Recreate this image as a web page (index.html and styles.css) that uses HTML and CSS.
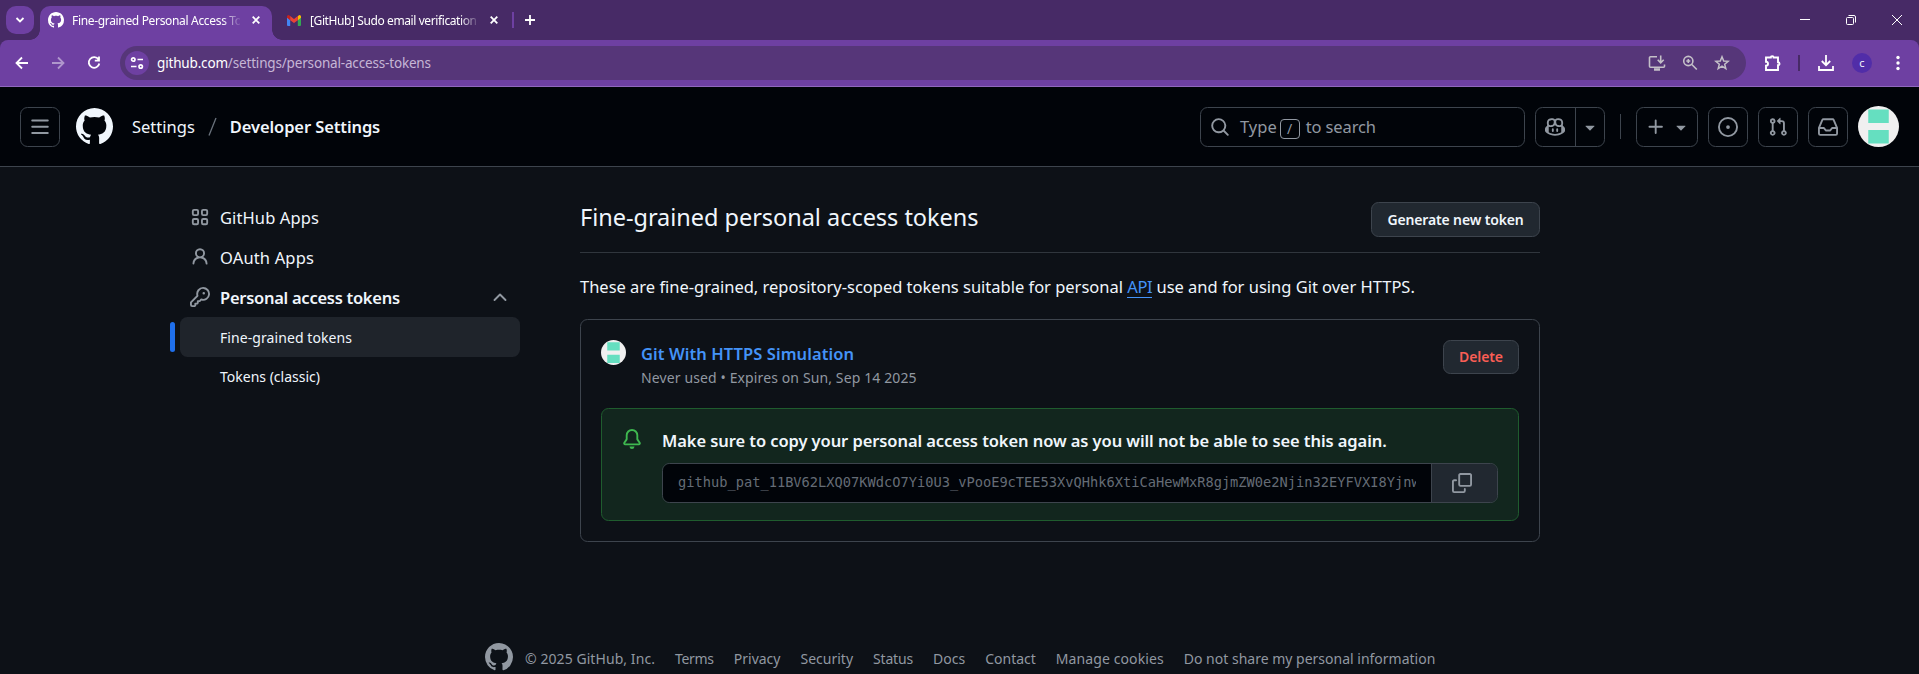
FILE: index.html
```html
<!DOCTYPE html>
<html lang="en">
<head>
<meta charset="utf-8">
<title>Fine-grained Personal Access Tokens</title>
<link rel="stylesheet" href="styles.css">
</head>
<body>
<svg class="defs" aria-hidden="true">
  <symbol id="mark" viewBox="0 0 16 16"><path d="M8 0c4.42 0 8 3.58 8 8a8.013 8.013 0 0 1-5.45 7.59c-.4.08-.55-.17-.55-.38 0-.27.01-1.13.01-2.2 0-.75-.25-1.23-.54-1.48 1.78-.2 3.65-.88 3.65-3.95 0-.88-.31-1.59-.82-2.15.08-.2.36-1.02-.08-2.12 0 0-.67-.22-2.2.82-.64-.18-1.32-.27-2-.27-.68 0-1.36.09-2 .27-1.53-1.03-2.2-.82-2.2-.82-.44 1.1-.16 1.92-.08 2.12-.51.56-.82 1.28-.82 2.15 0 3.06 1.86 3.75 3.64 3.95-.23.2-.44.55-.51 1.07-.46.21-1.61.55-2.33-.66-.15-.24-.6-.83-1.23-.82-.67.01-.27.38.01.53.34.19.73.9.82 1.13.16.45.68 1.31 2.69.94 0 .67.01 1.3.01 1.49 0 .21-.15.45-.55.38A7.995 7.995 0 0 1 0 8c0-4.42 3.58-8 8-8Z"/></symbol>
  <symbol id="caret" viewBox="0 0 16 16"><path d="m4.427 7.427 3.396 3.396a.25.25 0 0 0 .354 0l3.396-3.396A.25.25 0 0 0 11.396 7H4.604a.25.25 0 0 0-.177.427Z"/></symbol>
  <symbol id="identicon" viewBox="0 0 40 40"><rect width="40" height="40" fill="#f0f0f0"/><path fill="#65dfc0" d="M10 3.500h20v13.200H10zM10 23.500h20v13.200H10z"/></symbol>
</svg>

<div class="tabstrip">
  <div class="tabsearch"><svg width="10" height="10" viewBox="0 0 10 10" class="line w2"><path d="M1.500 3 5 6.500 8.500 3"/></svg></div>
  <div class="tab active">
    <svg class="fav" width="16" height="16"><use href="#mark"/></svg>
    <span class="tabtitle"><span class="t-tab1">Fine-grained Personal Access Tokens</span></span>
    <svg class="line w2 close" width="8" height="8" viewBox="0 0 8 8"><path d="M.7.7l6.600 6.600M7.300.7.7 7.300"/></svg>
  </div>
  <div class="tab">
    <svg width="14" height="11" viewBox="0 0 14 11"><path fill="#4285f4" d="M0 2v8a1 1 0 0 0 1 1h2.200V4.500z"/><path fill="#34a853" d="M14 2v8a1 1 0 0 1-1 1h-2.200V4.500z"/><path fill="#fbbc04" d="M10.800 1.300v3.900L14 2.800V1.500A1.500 1.500 0 0 0 11.600.4z"/><path fill="#c5221f" d="M0 1.500v1.300l3.200 2.400V1L2.400.4A1.500 1.500 0 0 0 0 1.500z"/><path fill="#ea4335" d="M3.200 1 7 3.900 10.800 1v4.200L7 8 3.200 5.200z"/></svg>
    <span class="tabtitle"><span class="t-tab2">[GitHub] Sudo email verification code</span></span>
    <svg class="line w2 close" width="8" height="8" viewBox="0 0 8 8"><path d="M.7.7l6.600 6.600M7.300.7.7 7.300"/></svg>
  </div>
  <i class="tabsep"></i>
  <svg class="line w2 newtab" width="10" height="10" viewBox="0 0 10 10"><path d="M5 0v10M0 5h10"/></svg>
  <div class="winctl">
    <svg class="line w1" width="10" height="10" viewBox="0 0 10 10"><path d="M0 4.500h10"/></svg>
    <svg class="line w1" width="10" height="10" viewBox="0 0 10 10"><rect x=".5" y="2.500" width="7" height="7" rx="1"/><path d="M2.500.5H8A1.500 1.500 0 0 1 9.500 2v5.500"/></svg>
    <svg class="line w1" width="10" height="10" viewBox="0 0 10 10"><path d="M0 0l10 10M10 0 0 10"/></svg>
  </div>
</div>

<div class="toolbar-wrap">
<div class="toolbar">
  <div class="nav">
    <svg class="line w2" width="16" height="16" viewBox="0 0 16 16"><path d="M14 8H3M8 2.500 2.500 8 8 13.500"/></svg>
    <svg class="line w2 dim" width="16" height="16" viewBox="0 0 16 16"><path d="M2 8h11M8 2.500 13.500 8 8 13.500"/></svg>
    <svg class="line w2" width="16" height="16" viewBox="0 0 16 16"><path d="M12.500 4.500A5.300 5.300 0 1 0 13.300 8.500M13 1.500v4.200H8.800"/></svg>
  </div>
  <div class="omnibox">
    <div class="sitechip"><svg class="line" width="14" height="14" viewBox="0 0 14 14" stroke-width="1.700"><circle cx="3.300" cy="3.500" r="1.700"/><path d="M7.500 3.500H13M1 10.500h5.500"/><circle cx="10.700" cy="10.500" r="1.700"/></svg></div>
    <span class="url t-url"><b>github.com</b>/settings/personal-access-tokens</span>
    <div class="omni-icons">
      <svg class="line" width="18" height="16" viewBox="0 0 18 16" stroke-width="1.600"><path d="M9 1.800H2.500a1 1 0 0 0-1 1v8.400a1 1 0 0 0 1 1h13a1 1 0 0 0 1-1V9.500M12.700.5v7M9.700 4.800l3 3 3-3"/><path d="M6 14.500h6" stroke-width="2.500"/></svg>
      <svg class="line" width="16" height="16" viewBox="0 0 16 16" stroke-width="1.600"><circle cx="6.300" cy="6" r="4.600"/><path d="M9.800 9.500l5 5M6.300 4v4M4.300 6h4"/></svg>
      <svg class="line" width="16" height="16" viewBox="0 0 16 16" stroke-width="1.500"><path d="M8 1.800l1.700 4.200 4.500.3-3.500 2.900 1.100 4.400L8 11.200l-3.800 2.400 1.100-4.400L1.800 6.300 6.300 6z"/></svg>
    </div>
  </div>
  <svg class="line ext" width="18" height="18" viewBox="0 0 18 18" stroke-width="1.900"><path d="M2 3.500h4.800a1.400 1.400 0 0 1 2.800 0H14v4.800a1.500 1.500 0 0 1 0 3V16H2v-4.200a2 2 0 0 0 0-4z"/></svg>
  <i class="toolsep"></i>
  <svg class="line w2 dl" width="16" height="16" viewBox="0 0 16 16"><path d="M8 0v10M3.800 6 8 10.200 12.200 6M1 11v4h14v-4"/></svg>
  <span class="profile">c</span>
  <svg class="dots" width="4" height="16" viewBox="0 0 4 16"><circle cx="2" cy="2.500" r="1.700"/><circle cx="2" cy="8" r="1.700"/><circle cx="2" cy="13.500" r="1.700"/></svg>
</div>
</div>

<header class="gh">
  <button class="sq"><svg class="oct" width="20" height="20" viewBox="0 0 16 16"><path d="M1 2.750A.75.75 0 0 1 1.750 2h12.500a.75.75 0 0 1 0 1.500H1.750A.75.75 0 0 1 1 2.750Zm0 5A.75.75 0 0 1 1.750 7h12.500a.75.75 0 0 1 0 1.500H1.750A.75.75 0 0 1 1 7.750ZM1.750 12h12.500a.75.75 0 0 1 0 1.500H1.750a.75.75 0 0 1 0-1.500Z"/></svg></button>
  <svg class="logo" width="37" height="37"><use href="#mark"/></svg>
  <nav class="crumbs"><span class="t-set">Settings</span><svg width="9" height="19" viewBox="0 0 9 19"><path d="M1 18.500 8 1" fill="none" stroke="#6b737d" stroke-width="1.300"/></svg><strong class="t-dev">Developer Settings</strong></nav>
  <div class="search">
    <svg class="oct" width="20" height="20" viewBox="0 0 16 16"><path d="M10.680 11.740a6 6 0 0 1-7.922-8.982 6 6 0 0 1 8.982 7.922l3.040 3.040a.749.749 0 0 1-.326 1.275.749.749 0 0 1-.734-.215ZM11.500 7a4.499 4.499 0 1 0-8.997 0A4.499 4.499 0 0 0 11.500 7Z"/></svg>
    <span class="t-type">Type</span><kbd>/</kbd><span class="t-tosearch">to search</span>
  </div>
  <div class="split">
    <span><svg class="oct" width="20" height="20" viewBox="0 0 16 16"><path d="M7.998 15.035c-4.562 0-7.873-2.914-7.998-3.749V9.338c.085-.628.677-1.686 1.588-2.065.013-.07.024-.143.036-.218.029-.183.06-.384.126-.612-.201-.508-.254-1.084-.254-1.656 0-.87.128-1.769.693-2.484.579-.733 1.494-1.124 2.724-1.261 1.206-.134 2.262.034 2.944.765.05.053.096.108.139.165.044-.057.094-.112.143-.165.682-.731 1.738-.899 2.944-.765 1.230.137 2.145.528 2.724 1.261.566.715.693 1.614.693 2.484 0 .572-.053 1.148-.254 1.656.066.228.098.429.126.612.012.076.024.148.037.218.924.385 1.522 1.471 1.591 2.095v1.872c0 .766-3.351 3.795-8.002 3.795Zm0-1.485c2.280 0 4.584-1.110 5.002-1.433V7.862l-.023-.116c-.49.21-1.075.291-1.727.291-1.146 0-2.059-.327-2.710-.991A3.222 3.222 0 0 1 8 6.303a3.240 3.240 0 0 1-.544.743c-.65.664-1.563.991-2.710.991-.652 0-1.236-.081-1.727-.291l-.023.116v4.255c.419.323 2.722 1.433 5.002 1.433ZM6.762 2.830c-.193-.206-.637-.413-1.682-.297-1.019.113-1.479.404-1.713.7-.247.312-.369.789-.369 1.554 0 .793.129 1.171.308 1.371.162.181.519.379 1.442.379.853 0 1.339-.235 1.638-.54.315-.322.527-.827.617-1.553.117-.935-.037-1.395-.241-1.614Zm4.155-.297c-1.044-.116-1.488.091-1.681.297-.204.219-.359.679-.242 1.614.091.726.303 1.231.618 1.553.299.305.784.54 1.638.54.922 0 1.280-.198 1.442-.379.179-.2.308-.578.308-1.371 0-.765-.123-1.242-.37-1.554-.233-.296-.693-.587-1.713-.7Z"/><path d="M6.250 9.037a.75.75 0 0 1 .75.75v1.501a.75.75 0 0 1-1.500 0V9.787a.75.75 0 0 1 .75-.75Zm4.250.75v1.501a.75.75 0 0 1-1.500 0V9.787a.75.75 0 0 1 1.500 0Z"/></svg></span>
    <span><svg class="oct" width="20" height="20"><use href="#caret"/></svg></span>
  </div>
  <i class="ghsep"></i>
  <button class="sq plus"><svg class="oct" width="20" height="20" viewBox="0 0 16 16"><path d="M7.750 2a.75.75 0 0 1 .75.75V7h4.250a.75.75 0 0 1 0 1.500H8.500v4.250a.75.75 0 0 1-1.500 0V8.500H2.750a.75.75 0 0 1 0-1.500H7V2.750A.75.75 0 0 1 7.750 2Z"/></svg><svg class="oct" width="20" height="20"><use href="#caret"/></svg></button>
  <button class="sq"><svg class="oct" width="20" height="20" viewBox="0 0 16 16"><path d="M8 9.500a1.500 1.500 0 1 0 0-3 1.500 1.500 0 0 0 0 3Z"/><path d="M8 0a8 8 0 1 1 0 16A8 8 0 0 1 8 0ZM1.500 8a6.500 6.500 0 1 0 13 0 6.500 6.500 0 0 0-13 0Z"/></svg></button>
  <button class="sq"><svg class="oct" width="20" height="20" viewBox="0 0 16 16"><path d="M1.500 3.250a2.250 2.250 0 1 1 3 2.122v5.256a2.251 2.251 0 1 1-1.500 0V5.372A2.250 2.250 0 0 1 1.500 3.250Zm5.677-.177L9.573.677A.25.25 0 0 1 10 .854V2.500h1A2.500 2.500 0 0 1 13.500 5v5.628a2.251 2.251 0 1 1-1.500 0V5a1 1 0 0 0-1-1h-1v1.646a.25.25 0 0 1-.427.177L7.177 3.427a.25.25 0 0 1 0-.354ZM3.750 2.500a.75.75 0 1 0 0 1.500.75.75 0 0 0 0-1.500Zm0 9.500a.75.75 0 1 0 0 1.500.75.75 0 0 0 0-1.500Zm8.250.75a.75.75 0 1 0 1.500 0 .75.75 0 0 0-1.500 0Z"/></svg></button>
  <button class="sq"><svg class="oct" width="20" height="20" viewBox="0 0 16 16"><path d="M2.800 2.060A1.750 1.750 0 0 1 4.410 1h7.180c.7 0 1.333.417 1.610 1.060l2.740 6.395c.04.093.06.194.06.295v4.500A1.750 1.750 0 0 1 14.250 15H1.750A1.750 1.750 0 0 1 0 13.250v-4.500c0-.101.02-.202.06-.295Zm1.610.44a.25.25 0 0 0-.23.152L1.887 8H4.750a.75.75 0 0 1 .6.3L6.625 10h2.750l1.275-1.700a.75.75 0 0 1 .6-.3h2.863L11.820 2.652a.25.25 0 0 0-.23-.152Zm10.090 7h-2.875l-1.275 1.700a.75.75 0 0 1-.6.3h-3.500a.75.75 0 0 1-.6-.3L4.375 9.500H1.500v3.750c0 .138.112.25.25.25h12.500a.25.25 0 0 0 .25-.25Z"/></svg></button>
  <svg class="avatar" width="41" height="41"><use href="#identicon"/></svg>
</header>

<div class="content">
  <aside class="side">
    <a class="item"><svg width="20" height="20" viewBox="0 0 16 16" fill="none" stroke="#9198a1" stroke-width="1.500"><rect x="2.250" y="2.250" width="4.200" height="4.200" rx="1"/><rect x="9.550" y="2.250" width="4.200" height="4.200" rx="1"/><rect x="2.250" y="9.550" width="4.200" height="4.200" rx="1"/><rect x="9.550" y="9.550" width="4.200" height="4.200" rx="1"/></svg><span class="t-apps">GitHub Apps</span></a>
    <a class="item"><svg class="oct" width="20" height="20" viewBox="0 0 16 16"><path d="M10.561 8.073a6.005 6.005 0 0 1 3.432 5.142.75.75 0 1 1-1.498.07 4.500 4.500 0 0 0-8.990 0 .75.75 0 0 1-1.498-.07 6.004 6.004 0 0 1 3.431-5.142 3.999 3.999 0 1 1 5.123 0ZM10.500 5a2.500 2.500 0 1 0-5 0 2.500 2.500 0 0 0 5 0Z"/></svg><span class="t-oauth">OAuth Apps</span></a>
    <a class="item bold"><svg class="oct" width="20" height="20" viewBox="0 0 16 16"><path d="M10.500 0a5.499 5.499 0 1 1-1.288 10.848l-.932.932a.749.749 0 0 1-.53.22H7v.75a.749.749 0 0 1-.22.53l-.5.5a.749.749 0 0 1-.53.22H5v.75a.749.749 0 0 1-.22.53l-.5.5a.749.749 0 0 1-.53.22h-2A1.750 1.750 0 0 1 0 14.250v-2c0-.199.079-.389.22-.53l4.932-4.932A5.500 5.500 0 0 1 10.500 0Zm-4 5.500c-.001.431.069.86.205 1.269a.75.75 0 0 1-.181.768L1.500 12.560v1.690c0 .138.112.25.25.25h1.690l.06-.06v-1.190a.75.75 0 0 1 .75-.75h1.190l.06-.06v-1.190a.75.75 0 0 1 .75-.75h1.190l1.023-1.025a.75.75 0 0 1 .768-.18A4 4 0 1 0 6.500 5.500ZM11 6a1 1 0 1 1 0-2 1 1 0 0 1 0 2Z"/></svg><span class="t-pat">Personal access tokens</span><svg class="chev" width="14" height="10" viewBox="0 0 14 10"><path d="M1.500 8 7 2.500 12.500 8" fill="none" stroke="#9198a1" stroke-width="1.900" stroke-linecap="round" stroke-linejoin="round"/></svg></a>
    <a class="sub current"><span class="t-fg">Fine-grained tokens</span></a>
    <a class="sub"><span class="t-classic">Tokens (classic)</span></a>
  </aside>
  <main class="main">
    <div class="head"><h1 class="t-h1">Fine-grained personal access tokens</h1><button class="btn gen"><span class="t-gen">Generate new token</span></button></div>
    <p class="intro t-intro">These are fine-grained, repository-scoped tokens suitable for personal <a>API</a> use and for using Git over HTTPS.</p>
    <section class="card">
      <div class="row">
        <svg class="avatar" width="25" height="25"><use href="#identicon"/></svg>
        <div class="meta"><a class="name"><span class="t-name">Git With HTTPS Simulation</span></a><div class="used"><span class="t-used">Never used • Expires on Sun, Sep 14 2025</span></div></div>
        <button class="btn del"><span class="t-del">Delete</span></button>
      </div>
      <div class="flash">
        <svg class="bell" width="20" height="20" viewBox="0 0 16 16"><path d="M8 16a2 2 0 0 0 1.985-1.750c.017-.137-.097-.25-.235-.25h-3.500c-.138 0-.252.113-.235.25A2 2 0 0 0 8 16ZM3 5a5 5 0 0 1 10 0v2.947c0 .05.015.098.042.139l1.703 2.555A1.519 1.519 0 0 1 13.482 13H2.518a1.516 1.516 0 0 1-1.263-2.360l1.703-2.554A.255.255 0 0 0 3 7.947Zm5-3.500A3.500 3.500 0 0 0 4.500 5v2.947c0 .346-.102.683-.294.97l-1.703 2.556a.017.017 0 0 0-.003.01l.001.006c0 .002.002.004.004.006l.006.004.007.001h10.964l.007-.001.006-.004.004-.006.001-.007a.017.017 0 0 0-.003-.01l-1.703-2.554a1.745 1.745 0 0 1-.294-.97V5A3.500 3.500 0 0 0 8 1.500Z"/></svg>
        <div class="flash-body">
          <div class="warn"><span class="t-warn">Make sure to copy your personal access token now as you will not be able to see this again.</span></div>
          <div class="copy"><div class="field"><div class="token">github_pat_11BV62LXQ07KWdcO7Yi0U3_vPooE9cTEE53XvQHhk6XtiCaHewMxR8gjmZW0e2Njin32EYFVXI8Yjnw</div></div>
          <button class="copybtn"><svg class="oct" width="20" height="20" viewBox="0 0 16 16"><path d="M0 6.750C0 5.784.784 5 1.750 5h1.500a.75.75 0 0 1 0 1.500h-1.500a.25.25 0 0 0-.25.25v7.500c0 .138.112.25.25.25h7.500a.25.25 0 0 0 .25-.25v-1.500a.75.75 0 0 1 1.500 0v1.500A1.750 1.750 0 0 1 9.250 16h-7.500A1.750 1.750 0 0 1 0 14.250Z"/><path d="M5 1.750C5 .784 5.784 0 6.750 0h7.500C15.216 0 16 .784 16 1.750v7.500A1.750 1.750 0 0 1 14.250 11h-7.500A1.750 1.750 0 0 1 5 9.250Zm1.750-.25a.25.25 0 0 0-.25.25v7.500c0 .138.112.25.25.25h7.500a.25.25 0 0 0 .25-.25v-7.500a.25.25 0 0 0-.25-.25Z"/></svg></button></div>
        </div>
      </div>
    </section>
  </main>
</div>

<footer class="foot">
  <svg width="28" height="28"><use href="#mark"/></svg>
  <span class="f1">© 2025 GitHub, Inc.</span><a class="f2">Terms</a><a class="f3">Privacy</a><a class="f4">Security</a><a class="f5">Status</a><a class="f6">Docs</a><a class="f7">Contact</a><a class="f8">Manage cookies</a><a class="f9">Do not share my personal information</a>
</footer>
</body>
</html>
```
FILE: styles.css
```css
* { box-sizing: border-box; }
body { margin: 0; height: 674px; overflow: hidden; background: #0d1117; color: #f0f6fc; font-family: "Noto Sans", "Open Sans", sans-serif; font-size: 16.500px; line-height: 1.500; white-space: nowrap; display: flex; flex-direction: column; }
button { font: inherit; color: inherit; padding: 0; margin: 0; }
svg { flex: none; display: block; }
.defs { display: none; }
.line { fill: none; stroke: #fff; }
.w1 { stroke-width: 1; }
.w2 { stroke-width: 1.800; }
.oct { fill: #9198a1; }

/* Browser tabs */
.tabstrip { flex: none; height: 40px; background: #472a66; display: flex; align-items: center; padding-left: 6px; font-size: 12px; color: #fff; }
.tabsearch { width: 28px; height: 28px; border-radius: 10px; background: #6e40a2; display: grid; place-items: center; margin-right: 6px; }
.tab { display: flex; align-items: center; width: 232px; height: 34px; margin-top: 6px; padding: 0 5px 6px 15px; }
.tab.active { position: relative; background: #6e40a2; border-radius: 10px 10px 0 0; padding-left: 8px; }
.tab.active::before, .tab.active::after { content: ""; position: absolute; bottom: 0; width: 10px; height: 10px; }
.tab.active::before { left: -10px; background: radial-gradient(circle at 0 0, transparent 9.500px, #6e40a2 10px); }
.tab.active::after { right: -10px; background: radial-gradient(circle at 100% 0, transparent 9.500px, #6e40a2 10px); }
.fav { fill: #fff; }
.tabtitle { flex: none; width: 168px; margin: 2px 0 0 8px; overflow: hidden; -webkit-mask-image: linear-gradient(90deg, #000 150px, transparent 170px); mask-image: linear-gradient(90deg, #000 150px, transparent 170px); }
.tab:not(.active) .tabtitle { margin-left: 9px; }
.t-tab1 { letter-spacing: -.33px; }
.t-tab2 { letter-spacing: -.4px; }
.close { margin-left: 12px; }
.tabsep { width: 2px; height: 16px; background: #6e40a2; margin-left: 8px; }
.newtab { margin-left: 11px; }
.winctl { margin-left: auto; display: flex; gap: 36px; padding-right: 17px; }

/* Address bar */
.toolbar-wrap { flex: none; background: #472a66; }
.toolbar { height: 47px; background: #6e40a2; border-bottom: 1px solid #9068bd; border-radius: 8px 8px 0 0; display: flex; align-items: center; padding-left: 14px; }
.nav { display: flex; gap: 20px; margin-right: 18px; }
.dim { opacity: .45; }
.omnibox { width: 1626px; height: 34px; border-radius: 17px; background: #563679; display: flex; align-items: center; padding: 0 16px 0 5px; }
.sitechip { width: 24px; height: 24px; border-radius: 50%; background: #6e40a2; display: grid; place-items: center; margin-right: 8px; }
.url { font-size: 13.500px; color: #c6b6d6; letter-spacing: -.17px; padding-top: 1px; }
.url b { font-weight: 400; color: #fff; }
.omni-icons { margin-left: auto; display: flex; gap: 16px; }
.omni-icons .line { stroke: #c4c0c8; }
.ext { margin-left: 18px; }
.toolsep { width: 2px; height: 16px; background: #472a66; margin: 0 18px 0 16px; }
.profile { width: 20px; height: 20px; border-radius: 50%; background: #512da8; margin: 0 24px 0 18px; font-size: 11px; line-height: 19px; text-align: center; }
.dots { fill: #fff; }

/* GitHub header */
.gh { flex: none; height: 80px; background: #010409; border-bottom: 1px solid #3d444d; display: flex; align-items: center; padding: 0 20px; }
.sq { width: 40px; height: 40px; border: 1px solid #3d444d; border-radius: 7.500px; background: none; display: flex; align-items: center; justify-content: center; margin-right: 10px; }
.logo { fill: #f0f6fc; margin-left: 6px; }
.crumbs { display: flex; align-items: center; margin-left: 19px; }
.crumbs span, .crumbs strong { padding-top: 2px; }
.crumbs svg { margin: 0 13px; }
strong, .bold { font-weight: 600; }
.t-dev { letter-spacing: -.1px; }
.search { width: 325px; height: 40px; border: 1px solid #3d444d; border-radius: 7.500px; margin-left: auto; display: flex; align-items: center; padding-left: 9px; color: #9198a1; }
.search span { padding-top: 2px; }
.t-tosearch { letter-spacing: -.12px; }
.search svg { margin-right: 10px; }
kbd { width: 20px; height: 20px; margin: 4px 6px 0 3px; border: 1px solid #9198a1; border-radius: 4px; font: 14px/18px "Noto Sans", sans-serif; text-align: center; }
.split { width: 70px; height: 40px; border: 1px solid #3d444d; border-radius: 7.500px; display: flex; margin: 0 15px 0 10px; }
.split span { flex: 1; display: grid; place-items: center; }
.split span:first-child { flex: 0 0 40px; border-right: 1px solid #3d444d; padding-right: 1px; }
.ghsep { width: 1px; height: 25px; background: #3d444d; margin-right: 15px; }
.plus { width: 62px; gap: 5px; padding-left: 2px; }
.avatar { border-radius: 50%; }

/* Page */
.content { flex: none; display: flex; height: 464px; }
.side { width: 580px; padding: 30px 60px 0 180px; }
.item { height: 40px; display: flex; align-items: center; padding: 0 13px 0 10px; }
.item span { padding-top: 2px; }
.item svg { margin-right: 10px; }
.item .chev { margin: 0 0 0 auto; }
.t-apps { letter-spacing: .105px; }
.t-oauth { letter-spacing: .15px; }
.t-pat { letter-spacing: -.27px; }
.sub { height: 39px; display: flex; align-items: center; padding-left: 40px; font-size: 14px; }
.t-fg { letter-spacing: .075px; }
.current { position: relative; height: 40px; border-radius: 7.500px; background: #1f242b; }
.current::before { content: ""; position: absolute; left: -10px; top: 5px; width: 5px; height: 30px; border-radius: 3px; background: #1f6feb; }
.main { width: 960px; padding-top: 35px; }
.head { height: 51px; border-bottom: 1px solid #30363d; display: flex; justify-content: space-between; align-items: flex-start; }
h1 { margin: -3px 0 0; font-size: 23.500px; font-weight: 400; line-height: 37px; letter-spacing: -.03px; }
.btn { height: 35px; border: 1px solid #3d444d; border-radius: 7.500px; background: #212830; font-size: 14px; font-weight: 600; }
.gen { width: 169px; letter-spacing: -.14px; }
.del { width: 76px; height: 34px; color: #fa5e55; margin-left: auto; letter-spacing: -.08px; padding-bottom: 2px; }
.intro { margin: 21px 0 19px; line-height: 26px; width: max-content; letter-spacing: -.01px; }
.intro a { color: #4493f8; display: inline-block; line-height: 20px; border-bottom: 1px solid #4493f8; letter-spacing: -.4px; }
.card { height: 223px; border: 1px solid #3d444d; border-radius: 7.500px; padding: 20px; }
.row { display: flex; height: 68px; }
.meta { margin-left: 15px; }
.name { color: #4493f8; font-weight: 600; line-height: 27px; display: block; letter-spacing: .074px; }
.used { color: #9198a1; font-size: 14px; line-height: 22px; letter-spacing: .12px; }
.flash { height: 113px; border: 1px solid #1f5c2e; border-radius: 7.500px; background: #12261e; display: flex; padding: 20px; }
.bell { fill: #3fb950; margin-right: 20px; }
.warn { height: 34px; line-height: 24px; font-weight: 600; letter-spacing: -.08px; }
.copy { display: flex; width: 836px; height: 40px; border: 1px solid #3d444d; border-radius: 7.500px; overflow: hidden; }
.field { width: 768px; background: #010409; padding: 0 15px; }
.token { overflow: hidden; font: 13.700px/36px "DejaVu Sans Mono", monospace; color: #656c76; }
.copybtn { flex: 1; border: 0; border-left: 1px solid #3d444d; background: #212830; display: flex; align-items: center; padding: 0 0 0 20px; }
.foot { display: flex; padding: 12px 0 0 485px; color: #9198a1; font-size: 14px; line-height: 32px; }
.foot svg { fill: #9198a1; }
.foot span { margin-left: 12px; letter-spacing: .067px; }
.foot a { margin-left: 20px; }
.foot .f2 { letter-spacing: -.3px; }
.foot .f5 { letter-spacing: -.17px; }
.foot .f8 { letter-spacing: .1px; }
```
